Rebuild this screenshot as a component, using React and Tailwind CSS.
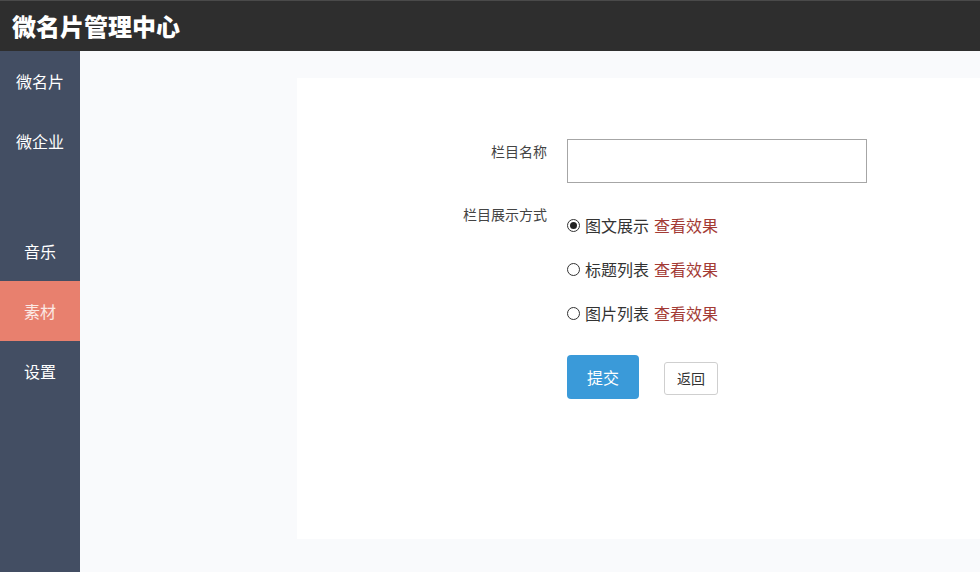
import React from 'react';

const font = { fontFamily: '"Microsoft YaHei", "Noto Sans CJK SC", sans-serif' };

const navTop = ['微名片', '微企业'];
const navBottom = [
  { label: '音乐' },
  { label: '素材', active: true },
  { label: '设置' },
];

const options = ['图文展示', '标题列表', '图片列表'];

const App = () => {
  return (
    <div className="w-[980px] h-[572px] flex flex-col bg-[#f9fafc] overflow-hidden" style={font}>
      <header className="h-[51px] shrink-0 bg-[#2e2e2e] border-t border-[#4a4a4a] flex items-center px-3">
        <h1 className="text-[24px] font-black text-white">微名片管理中心</h1>
      </header>

      <div className="flex flex-1">
        <aside className="w-20 shrink-0 bg-[#434e63] text-white text-base">
          {navTop.map((t) => (
            <div key={t} className="h-[60px] flex items-center justify-center">{t}</div>
          ))}
          <div className="h-[50px]" />
          {navBottom.map((n) => (
            <div
              key={n.label}
              className={`h-[60px] flex items-center justify-center ${n.active ? 'bg-[#e8806e] text-[#fbe9e4]' : ''}`}
            >
              {n.label}
            </div>
          ))}
        </aside>

        <main className="flex-1 pl-[217px] pt-[27px] pb-[33px]">
          <div className="bg-white h-full pt-[61px]">
            <div className="flex">
              <label className="w-[250px] text-right text-[14px] text-[#444] pt-[2px]">栏目名称</label>
              <input className="ml-5 w-[300px] h-[44px] border border-[#a6a6a6] outline-none" />
            </div>

            <div className="flex mt-[21px]">
              <label className="w-[250px] text-right text-[14px] text-[#444]">栏目展示方式</label>
              <div className="ml-5 -mt-[1px] flex flex-col">
                {options.map((o, i) => (
                  <div key={o} className="h-[44px] flex items-center text-[16px]">
                    <span className="w-[13px] h-[13px] rounded-full border border-[#333] flex items-center justify-center mr-[5px]">
                      {i === 0 && <span className="w-[7px] h-[7px] rounded-full bg-[#222]" />}
                    </span>
                    <span className="text-[#333]">{o}</span>
                    <span className="ml-[5px] text-[#a33b35]">查看效果</span>
                  </div>
                ))}
                <div className="flex items-center mt-[20px]">
                  <button className="w-[72px] h-[44px] rounded-[4px] bg-[#3a9ad9] text-white text-base">提交</button>
                  <button className="ml-[25px] w-[54px] h-[33px] rounded-[3px] border border-[#cfcfcf] bg-white text-[#333] text-[14px] mt-[2px]">返回</button>
                </div>
              </div>
            </div>
          </div>
        </main>
      </div>
    </div>
  );
};

export default App;
